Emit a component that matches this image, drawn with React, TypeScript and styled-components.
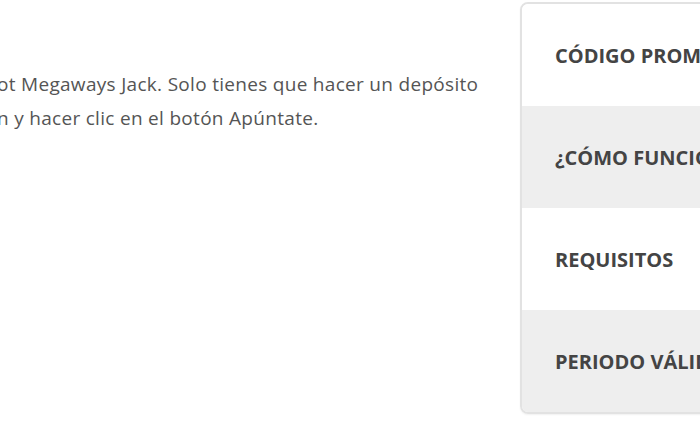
import { createGlobalStyle, styled } from "styled-components";

const GlobalStyle = createGlobalStyle`
  html, body {
    margin: 0;
    padding: 0;
    background: #ffffff;
    overflow: hidden;
  }
  * {
    box-sizing: border-box;
  }
`;

const StyledPage = styled.div`
  display: flex;
  width: 700px;
  height: 441px;
  overflow: hidden;
  font-family: "Open Sans", "Noto Sans", sans-serif;
`;

const StyledMain = styled.main`
  flex: 0 0 523px;
  padding-top: 67px;
  margin-left: -3px;
`;

const StyledText = styled.p`
  margin: 0;
  font-size: 19px;
  letter-spacing: 0.3px;
  line-height: 34px;
  color: #555555;
  white-space: nowrap;
`;

const StyledAside = styled.aside`
  flex: 0 0 300px;
  padding-top: 2px;
`;

const StyledCard = styled.div`
  border: 2px solid #e2e2e2;
  border-radius: 8px;
  overflow: hidden;
  box-shadow: 0 1px 2px rgba(0, 0, 0, 0.06);
`;

const StyledRow = styled.div<{ $shaded?: boolean }>`
  display: flex;
  align-items: center;
  height: 102px;
  padding-left: 33px;
  background: ${({ $shaded }) => ($shaded ? "#eeeeee" : "#ffffff")};
  font-size: 20px;
  font-weight: 700;
  color: #444444;
  white-space: nowrap;
`;

const rows = ["CÓDIGO PROMOCIONAL", "¿CÓMO FUNCIONA?", "REQUISITOS", "PERIODO VÁLIDO"];

export default function App() {
  return (
    <>
      <GlobalStyle />
      <StyledPage>
        <StyledMain>
          <StyledText>
            ot Megaways Jack. Solo tienes que hacer un depósito
            <br />
            n y hacer clic en el botón Apúntate.
          </StyledText>
        </StyledMain>
        <StyledAside>
          <StyledCard>
            {rows.map((label, i) => (
              <StyledRow key={label} $shaded={i % 2 === 1}>
                {label}
              </StyledRow>
            ))}
          </StyledCard>
        </StyledAside>
      </StyledPage>
    </>
  );
}
